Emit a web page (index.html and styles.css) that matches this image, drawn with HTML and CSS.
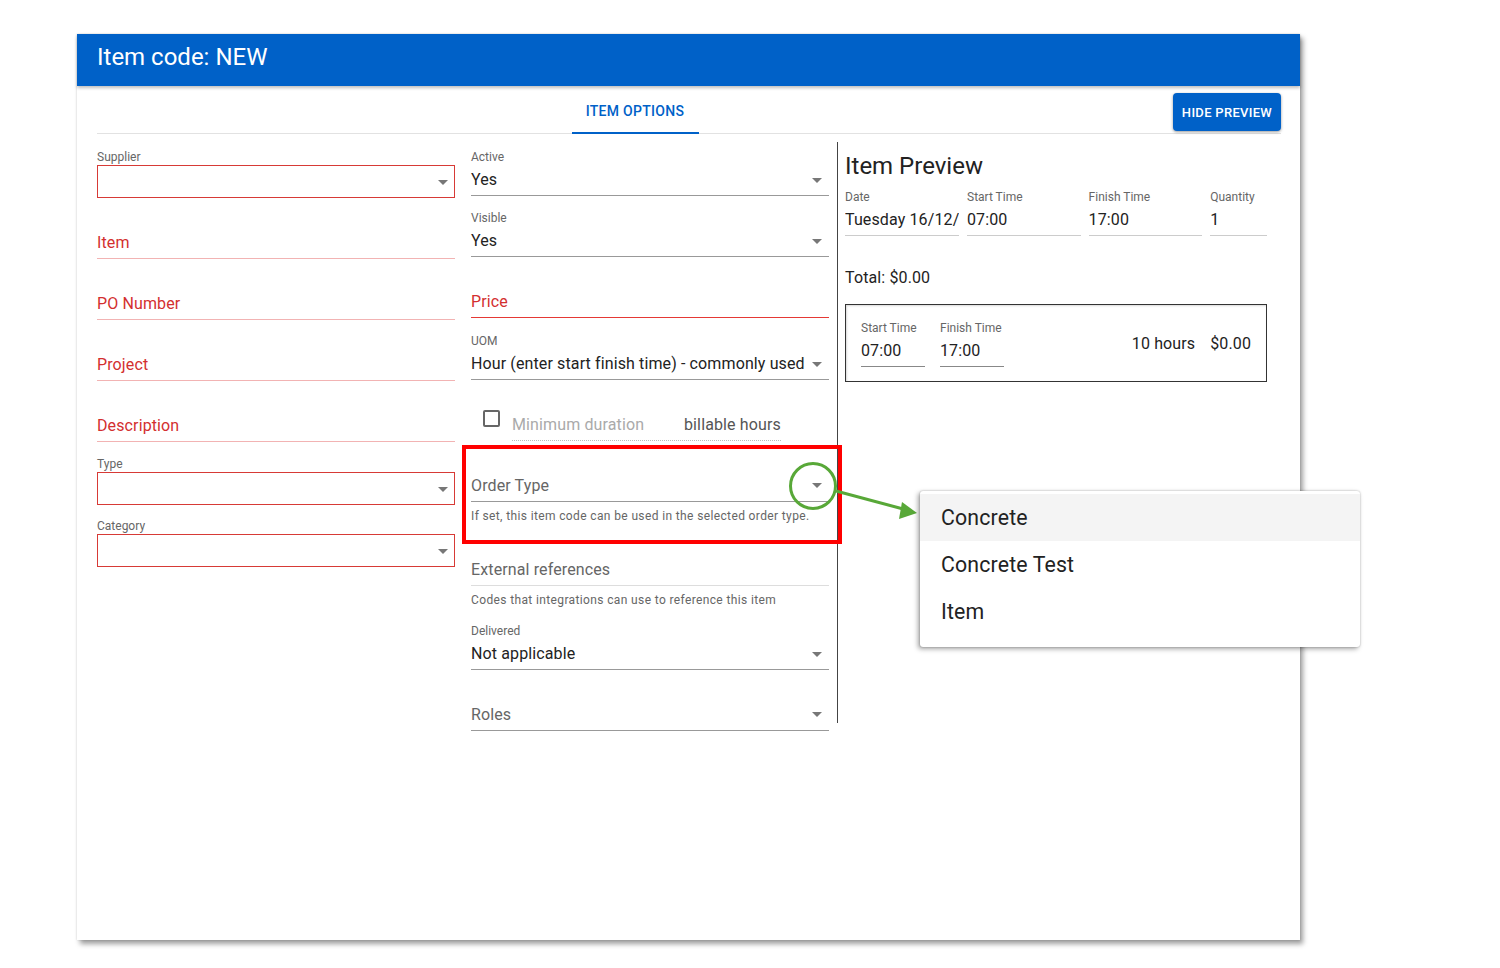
FILE: index.html
```html
<!DOCTYPE html>
<html>
<head>
<meta charset="utf-8">
<link rel="stylesheet" href="styles.css">
</head>
<body>
<div class="dialog">
  <div class="header">Item code: NEW</div>
  <div class="tabbar">
    <div class="tabs"><div class="tab">ITEM OPTIONS</div></div>
    <div class="btn">HIDE PREVIEW</div>
  </div>
  <div class="content">
    <div class="col">
      <div class="ofield">
        <div class="lbl">Supplier</div>
        <div class="obox"><span class="caret"></span></div>
      </div>
      <div class="tf err"><span>Item</span></div>
      <div class="tf err"><span>PO Number</span></div>
      <div class="tf err"><span>Project</span></div>
      <div class="tf err"><span>Description</span></div>
      <div class="ofield gap15">
        <div class="lbl">Type</div>
        <div class="obox"><span class="caret"></span></div>
      </div>
      <div class="ofield gap">
        <div class="lbl">Category</div>
        <div class="obox"><span class="caret"></span></div>
      </div>
    </div>
    <div class="col">
      <div class="sel">
        <div class="lbl">Active</div>
        <div class="val"><span>Yes</span><span class="caret"></span></div>
      </div>
      <div class="sel gap15">
        <div class="lbl">Visible</div>
        <div class="val"><span>Yes</span><span class="caret"></span></div>
      </div>
      <div class="tf err strong"><span>Price</span></div>
      <div class="sel gap16">
        <div class="lbl">UOM</div>
        <div class="val"><span>Hour (enter start finish time) - commonly used</span><span class="caret"></span></div>
      </div>
      <div class="minrow">
        <span class="check"></span>
        <div class="mininput"><span class="ph">Minimum duration</span><span class="suffix">billable hours</span></div>
      </div>
      <div class="tf plain"><span class="grey">Order Type</span><span class="caret"></span></div>
      <div class="helper">If set, this item code can be used in the selected order type.</div>
      <div class="tf plain light ext"><span class="grey">External references</span></div>
      <div class="helper">Codes that integrations can use to reference this item</div>
      <div class="sel gap2">
        <div class="lbl">Delivered</div>
        <div class="val"><span>Not applicable</span><span class="caret"></span></div>
      </div>
      <div class="tf plain"><span class="grey">Roles</span><span class="caret"></span></div>
    </div>
    <div class="sep"></div>
    <div class="preview">
      <div class="ptitle">Item Preview</div>
      <div class="prow">
        <div class="pf w114"><div class="lbl">Date</div><div class="pv">Tuesday 16/12/</div></div>
        <div class="pf w114"><div class="lbl">Start Time</div><div class="pv">07:00</div></div>
        <div class="pf w114"><div class="lbl">Finish Time</div><div class="pv">17:00</div></div>
        <div class="pf w57"><div class="lbl">Quantity</div><div class="pv">1</div></div>
      </div>
      <div class="total">Total: $0.00</div>
      <div class="pbox">
        <div class="pf w64"><div class="lbl">Start Time</div><div class="pv dark">07:00</div></div>
        <div class="pf w64"><div class="lbl">Finish Time</div><div class="pv dark">17:00</div></div>
        <div class="spacer"></div>
        <div class="sum">10 hours</div>
        <div class="sum">$0.00</div>
      </div>
    </div>
  </div>
</div>

<div class="highlight"></div>
<svg class="annot" width="160" height="90" viewBox="780 450 160 90">
  <circle cx="813" cy="486" r="22.5" fill="none" stroke="#58a838" stroke-width="3"/>
  <line x1="836" y1="491" x2="905" y2="509.5" stroke="#58a838" stroke-width="3"/>
  <polygon points="917,513 902,502 899,519" fill="#58a838"/>
</svg>
<div class="menu">
  <div class="mi active">Concrete</div>
  <div class="mi">Concrete Test</div>
  <div class="mi">Item</div>
</div>
</body>
</html>
```

FILE: styles.css
```css
* { box-sizing: border-box; }
body {
  margin: 0;
  width: 1500px;
  height: 968px;
  overflow: hidden;
  position: relative;
  background: #fff;
  font-family: Roboto, "Liberation Sans", sans-serif;
  color: #222;
}
.dialog {
  margin: 34px 0 0 77px;
  width: 1223px;
  height: 906px;
  background: #fff;
  box-shadow: 3px 4px 5px rgba(0,0,0,0.38), 0 0 2px rgba(0,0,0,0.15);
}
.header {
  height: 52px;
  background: #0061c8;
  color: #fff;
  font-size: 24px;
  padding: 0 0 6px 20px;
  display: flex;
  align-items: center;
  box-shadow: 0 2px 3px rgba(0,0,0,0.25);
  position: relative;
}
.tabbar {
  display: flex;
  margin: 0 19px 0 20px;
  height: 48px;
  border-bottom: 1px solid #e2e2e2;
}
.tabs { flex: 1; display: flex; justify-content: center; }
.tab {
  width: 127px;
  height: 48px;
  padding-top: 3px;
  color: #0061c8;
  font-size: 14px;
  font-weight: 500;
  letter-spacing: 0.3px;
  display: flex;
  align-items: center;
  justify-content: center;
  border-bottom: 2px solid #0061c8;
}
.btn {
  margin-top: 7px;
  width: 108px;
  height: 38px;
  background: #0061c8;
  color: #fff;
  font-size: 13px;
  font-weight: 500;
  letter-spacing: 0.3px;
  border-radius: 4px;
  display: flex;
  align-items: center;
  justify-content: center;
  box-shadow: 0 1px 3px rgba(0,0,0,0.4);
}
.content {
  display: flex;
  margin-left: 20px;
}
.col {
  width: 358px;
  padding-top: 16px;
  display: flex;
  flex-direction: column;
}
.col + .col { margin-left: 16px; }
.lbl {
  font-size: 12px;
  line-height: 14px;
  color: #666;
}
.caret {
  width: 0; height: 0;
  border-left: 5px solid transparent;
  border-right: 5px solid transparent;
  border-top: 5px solid #777;
  margin-right: 7px;
  flex: none;
}
.ofield .obox {
  margin-top: 1px;
  height: 33px;
  border: 1px solid #d73a36;
  display: flex;
  align-items: center;
  justify-content: flex-end;
  padding-top: 2px;
}
.ofield .obox .caret { margin-right: 6px; }
.gap { margin-top: 14px; }
.gap15 { margin-top: 15px; }
.gap16 { margin-top: 16px; }
.gap2 { margin-top: 17px; }
.tf {
  height: 61px;
  display: flex;
  align-items: flex-end;
  justify-content: space-between;
  padding-bottom: 6px;
  font-size: 16px;
  line-height: 19px;
  letter-spacing: 0.12px;
  border-bottom: 1px solid #999;
}
.tf .caret { margin-bottom: 7px; }
.tf.err { color: #d32f2f; border-bottom-color: #f2b3b3; }
.tf.err.strong { border-bottom-color: #e53935; }
.tf.light { border-bottom-color: #ddd; }
.tf.ext { height: 63px; }
.grey { color: #666; }
.sel { display: flex; flex-direction: column; }
.sel .val {
  margin-top: 6px;
  display: flex;
  align-items: center;
  justify-content: space-between;
  font-size: 16px;
  line-height: 19px;
  letter-spacing: 0.12px;
  padding-bottom: 6px;
  border-bottom: 1px solid #999;
}
.sel .val .caret { margin-top: 2px; }
.minrow {
  height: 61px;
  display: flex;
  align-items: flex-end;
}
.check {
  width: 17px;
  height: 17px;
  border: 2px solid #666;
  border-radius: 2px;
  margin: 0 12px 14px 12px;
}
.mininput {
  width: 269px;
  display: flex;
  font-size: 16px;
  line-height: 19px;
  letter-spacing: 0.12px;
  padding-bottom: 6px;
  border-bottom: 1px dotted #bbb;
}
.mininput .ph { color: #aaa; width: 172px; }
.mininput .suffix { color: #555; }
.helper {
  margin-top: 7px;
  font-size: 12px;
  line-height: 14px;
  color: #666;
  letter-spacing: 0.37px;
}
.sep {
  margin: 8px 7px 0 8px;
  width: 1px;
  height: 581px;
  background: #444;
}
.preview {
  width: 422px;
  padding-top: 18px;
}
.ptitle { font-size: 24px; line-height: 28px; color: #222; }
.prow { display: flex; gap: 8px; margin-top: 10px; }
.pf { display: flex; flex-direction: column; }
.pv {
  margin-top: 6px;
  font-size: 16px;
  line-height: 19px;
  letter-spacing: 0.12px;
  padding-bottom: 6px;
  border-bottom: 1px solid #ccc;
  white-space: nowrap;
  overflow: hidden;
}
.pv.dark { border-bottom-color: #888; }
.w114 { width: 114px; }
.w57 { width: 57px; }
.w64 { width: 64px; }
.total { margin-top: 32px; font-size: 16px; line-height: 19px; letter-spacing: 0.12px; }
.pbox {
  margin-top: 17px;
  height: 78px;
  border: 1px solid #333;
  display: flex;
  align-items: center;
  padding: 0 15px;
  gap: 15px;
  box-shadow: inset 1px 1px 2px rgba(0,0,0,0.15);
}
.pbox .pf { padding-top: 2px; }
.spacer { flex: 1; }
.sum { font-size: 16px; line-height: 19px; letter-spacing: 0.12px; }
.highlight {
  position: absolute;
  left: 462px;
  top: 445px;
  width: 380px;
  height: 99px;
  border: 4px solid #ff0000;
}
.annot {
  position: absolute;
  left: 780px;
  top: 450px;
}
.menu {
  position: absolute;
  left: 920px;
  top: 491px;
  width: 440px;
  height: 156px;
  background: #fff;
  border-radius: 3px;
  padding-top: 3px;
  box-shadow: -2px 2px 5px rgba(0,0,0,0.35), 0 0 2px rgba(0,0,0,0.3);
}
.mi {
  height: 47px;
  padding-left: 21px;
  display: flex;
  align-items: center;
  font-size: 21.3px;
  letter-spacing: 0.15px;
  color: #222;
}
.mi.active { background: #f4f4f4; }
```
